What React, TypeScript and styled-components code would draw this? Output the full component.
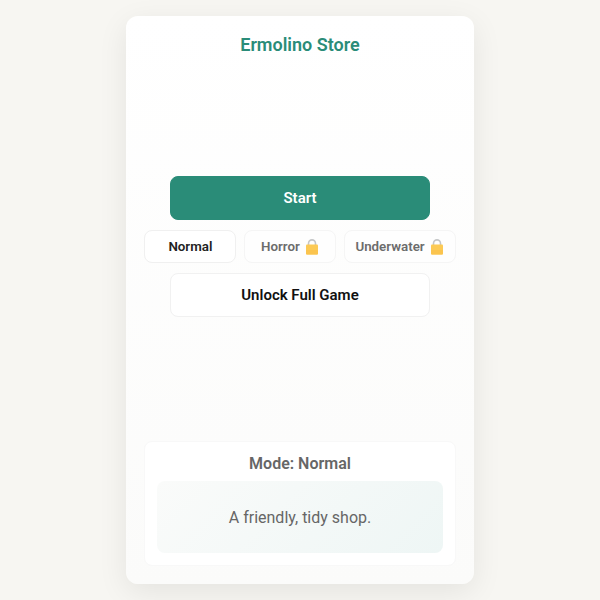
import React, { useState } from "react";
import styled, { createGlobalStyle } from "styled-components";

const GlobalStyle = createGlobalStyle`
  *, *::before, *::after { box-sizing: border-box; }
  body {
    margin: 0;
    background: #f7f6f2;
    color: #1a1a1a;
    font-family: Roboto, "Liberation Sans", sans-serif;
  }
  button { font-family: inherit; cursor: pointer; }
`;

const Page = styled.main`
  display: flex;
  justify-content: center;
  min-height: 100vh;
  padding: 16px;
`;

const Card = styled.section`
  display: flex;
  flex-direction: column;
  width: 100%;
  max-width: 348px;
  padding: 18px;
  border-radius: 12px;
  background: linear-gradient(180deg, #ffffff, #fbfbfa);
  box-shadow: 0 8px 30px rgba(0, 0, 0, 0.08);
`;

const Title = styled.h1`
  margin: 0;
  color: #2a8c78;
  font-size: 18px;
  font-weight: 600;
  line-height: 22px;
  text-align: center;
`;

const Menu = styled.div`
  display: flex;
  flex: 1;
  flex-direction: column;
  align-items: center;
  justify-content: center;
  gap: 10px;
`;

const ActionButton = styled.button<{ $primary?: boolean }>`
  width: 100%;
  max-width: 260px;
  height: 44px;
  border: 1px solid ${(p) => (p.$primary ? "#2a8c78" : "#f1f1f1")};
  border-radius: 8px;
  background: ${(p) => (p.$primary ? "#2a8c78" : "#ffffff")};
  color: ${(p) => (p.$primary ? "#ffffff" : "#111111")};
  font-size: 15px;
  font-weight: 600;
`;

const ModeRow = styled.div`
  display: flex;
  flex-wrap: wrap;
  justify-content: center;
  gap: 8px;
`;

const ModeButton = styled.button<{ $locked: boolean }>`
  display: flex;
  align-items: center;
  justify-content: center;
  gap: 4px;
  min-width: 92px;
  height: 33px;
  padding: 0 10px;
  border: 1px solid ${(p) => (p.$locked ? "#f5f5f5" : "#f0f0f0")};
  border-radius: 8px;
  background: ${(p) => (p.$locked ? "#fefefe" : "#ffffff")};
  color: ${(p) => (p.$locked ? "#6c6c6c" : "#222222")};
  font-weight: 600;
  white-space: nowrap;
`;

const LockIcon = styled.svg`
  width: 16px;
  height: 16px;
`;

const InfoPanel = styled.section`
  display: flex;
  flex-direction: column;
  gap: 8px;
  margin-top: 4px;
  padding: 12px;
  border: 1px solid #f8f8f8;
  border-radius: 8px;
  background: #ffffff;
  color: #666666;
  text-align: center;
`;

const InfoTitle = styled.h2`
  margin: 0;
  font-size: 16px;
  font-weight: 600;
  line-height: 19px;
`;

const InfoText = styled.p`
  display: flex;
  align-items: center;
  justify-content: center;
  min-height: 72px;
  margin: 0;
  border-radius: 8px;
  background: linear-gradient(135deg, #fafbfa, #eef6f5);
  font-size: 16px;
`;

function Lock() {
  return (
    <LockIcon viewBox="0 0 16 16" role="img" aria-label="locked">
      <path d="M4.5 6V4.4a3.5 3.5 0 0 1 7 0V6" fill="none" stroke="#c4c6c7" strokeWidth="1.6" />
      <rect x="2" y="5.5" width="12" height="10" rx="1" fill="#fcca55" />
      <path d="M2 11h12v3.5a1 1 0 0 1-1 1H3a1 1 0 0 1-1-1z" fill="#fbc44e" />
    </LockIcon>
  );
}

const modes = [
  { name: "Normal", locked: false, text: "A friendly, tidy shop." },
  { name: "Horror", locked: true, text: "" },
  { name: "Underwater", locked: true, text: "" },
];

export default function App() {
  const [mode, setMode] = useState(modes[0]);
  return (
    <>
      <GlobalStyle />
      <Page>
        <Card>
          <Title>Ermolino Store</Title>
          <Menu>
            <ActionButton type="button" $primary>Start</ActionButton>
            <ModeRow role="group" aria-label="Mode">
              {modes.map((m) => (
                <ModeButton
                  key={m.name}
                  type="button"
                  $locked={m.locked}
                  disabled={m.locked}
                  aria-pressed={m === mode}
                  onClick={() => setMode(m)}
                >
                  {m.name}
                  {m.locked && <Lock />}
                </ModeButton>
              ))}
            </ModeRow>
            <ActionButton type="button">Unlock Full Game</ActionButton>
          </Menu>
          <InfoPanel>
            <InfoTitle>Mode: {mode.name}</InfoTitle>
            <InfoText>{mode.text}</InfoText>
          </InfoPanel>
        </Card>
      </Page>
    </>
  );
}
